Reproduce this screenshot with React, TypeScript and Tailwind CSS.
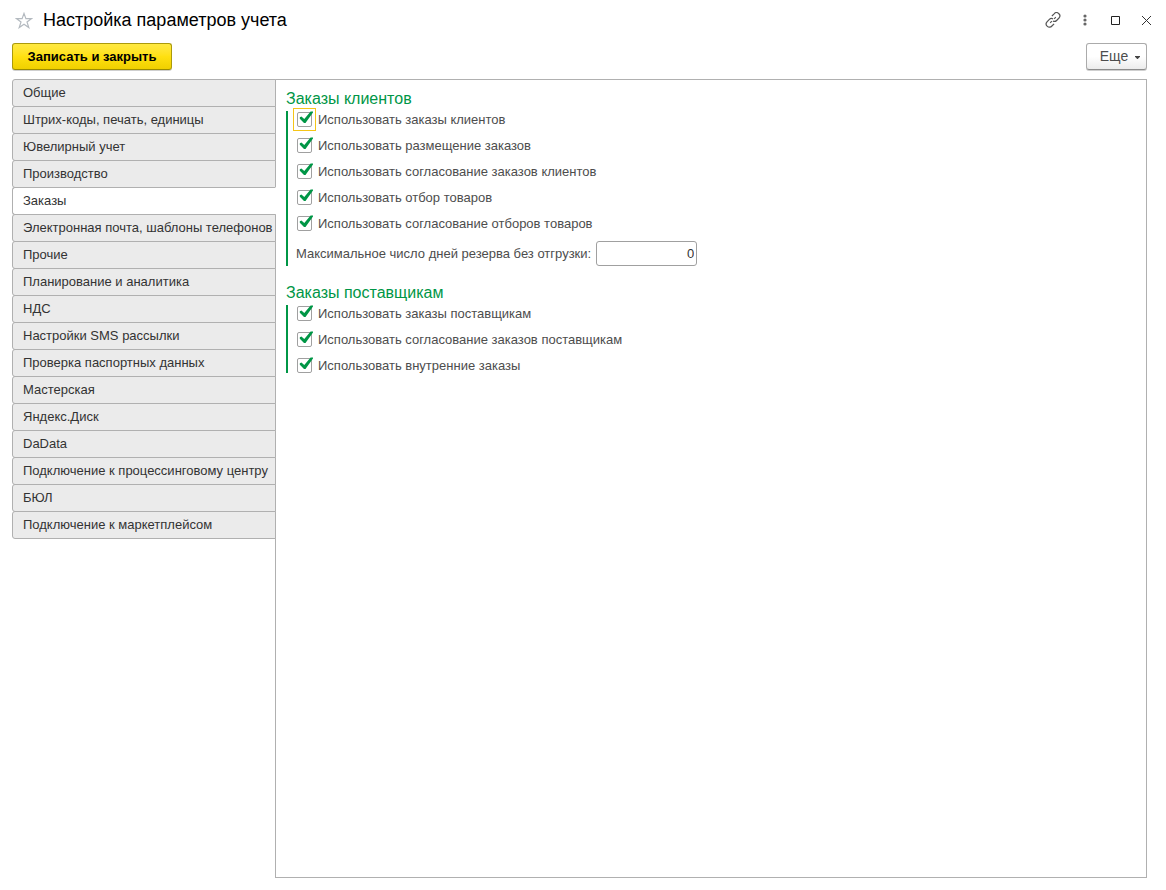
import { useState } from "react";

const tabs = [
  "Общие",
  "Штрих-коды, печать, единицы",
  "Ювелирный учет",
  "Производство",
  "Заказы",
  "Электронная почта, шаблоны телефонов",
  "Прочие",
  "Планирование и аналитика",
  "НДС",
  "Настройки SMS рассылки",
  "Проверка паспортных данных",
  "Мастерская",
  "Яндекс.Диск",
  "DaData",
  "Подключение к процессинговому центру",
  "БЮЛ",
  "Подключение к маркетплейсом",
];

const customerOptions = [
  "Использовать заказы клиентов",
  "Использовать размещение заказов",
  "Использовать согласование заказов клиентов",
  "Использовать отбор товаров",
  "Использовать согласование отборов товаров",
];

const supplierOptions = [
  "Использовать заказы поставщикам",
  "Использовать согласование заказов поставщикам",
  "Использовать внутренние заказы",
];

function Option({ label, highlighted = false }: { label: string; highlighted?: boolean }) {
  return (
    <label className="flex h-4 items-start gap-[6px] pl-px leading-[18px] whitespace-nowrap">
      <span className="relative mt-px block size-[15px] shrink-0">
        {highlighted && <span className="absolute -inset-[3px] outline outline-[#f5c518]" />}
        <input
          type="checkbox"
          defaultChecked
          className="peer relative block size-[15px] appearance-none rounded-[2px] border border-[#a0a0a0] bg-white outline-offset-3 focus:outline focus:outline-[#f5c518]"
        />
        <svg
          viewBox="0 0 15 15"
          className="pointer-events-none absolute inset-0 hidden size-[15px] overflow-visible peer-checked:block"
          fill="#009646"
          aria-hidden="true"
        >
          <path d="M2.8 5.2 L4.4 4.4 L7.3 7 L13.6 -0.6 H16 V0.5 L8.5 11 H7 L2.8 6.8 Z" />
        </svg>
      </span>
      {label}
    </label>
  );
}

function Group({ title, children }: { title: string; children: React.ReactNode }) {
  return (
    <section>
      <h2 className="h-6 text-base leading-6 text-[#009646]">{title}</h2>
      <div className="flex flex-col items-start gap-[10px] border-l-2 border-[#009646] pl-2">{children}</div>
    </section>
  );
}

export default function App() {
  const [active, setActive] = useState("Заказы");

  return (
    <main className="flex min-h-screen flex-col bg-white pr-[19px] pb-3 pl-3 font-['Liberation_Sans',Arial,sans-serif] text-[13px] leading-4 text-[#4d4d4d]">
      <header className="flex h-[43px] items-center justify-between pb-[3px]">
        <div className="flex items-center gap-[10px] pl-[3px]">
          <button type="button" aria-label="Добавить в избранное">
            <svg viewBox="0 0 18 17" className="block h-[17px] w-[18px]" fill="none" stroke="#b4bac0" strokeWidth="1.2" aria-hidden="true">
              <path d="M9 1.4 L10.9 6.6 H16.6 L12 10 L13.8 15.6 L9 12.3 L4.2 15.6 L6 10 L1.4 6.6 H7.1 Z" />
            </svg>
          </button>
          <h1 className="text-lg leading-6 text-black">Настройка параметров учета</h1>
        </div>
        <div className="-mr-[5px] flex items-center">
          <button type="button" aria-label="Скопировать ссылку" className="mr-[22px]">
            <svg viewBox="0 0 16 16" className="block size-4" fill="none" stroke="#555" strokeWidth="1.2" aria-hidden="true">
              <path d="M6.9 4 L9.1 1.8 A2.9 2.9 0 0 1 14 6 L11.6 8.5 A2.9 2.9 0 0 1 7.9 8.9" />
              <path d="M9.1 11.8 L6.9 14 A2.9 2.9 0 0 1 2 9.8 L4.4 7.3 A2.9 2.9 0 0 1 8.1 6.9" />
              <path d="M5.2 10.8 L6.8 9.2 M9.2 6.8 L10.8 5.2" />
            </svg>
          </button>
          <button type="button" aria-label="Дополнительные действия" className="mr-6">
            <svg viewBox="0 0 4 12" className="block h-3 w-1" fill="#666" aria-hidden="true">
              <circle cx="2" cy="2" r="1.6" />
              <circle cx="2" cy="6" r="1.6" />
              <circle cx="2" cy="10" r="1.6" />
            </svg>
          </button>
          <button type="button" aria-label="Развернуть" className="mr-5">
            <svg viewBox="0 0 10 10" className="block size-[10px]" fill="none" stroke="#222" aria-hidden="true">
              <path d="M.5 1.5 H8.5 V9.5 H.5 Z" />
            </svg>
          </button>
          <button type="button" aria-label="Закрыть">
            <svg viewBox="0 0 11 11" className="block size-[11px]" fill="none" stroke="#333" aria-hidden="true">
              <path d="M1 1 L10 10 M10 1 L1 10" />
            </svg>
          </button>
        </div>
      </header>

      <div className="mb-[9px] flex items-start justify-between">
        <button
          type="button"
          className="h-[27px] w-40 rounded-[3px] border border-[#ab9a0c] border-b-[#9c8c00] bg-linear-to-b from-[#ffe940] via-[#ffe010] to-[#f0d000] font-bold text-black shadow-[0_1px_0_#cfcfcf]"
        >
          Записать и закрыть
        </button>
        <button
          type="button"
          className="flex h-[27px] w-[61px] items-center justify-center gap-[7px] rounded-[3px] border border-[#ababab] border-b-[#8c8c8c] bg-linear-to-b from-white from-50% to-[#ececec] pb-px pl-[7px] text-sm leading-4 shadow-[0_1px_0_#cfcfcf]"
        >
          Еще
          <svg viewBox="0 0 5 3" className="mt-[2px] block h-[3px] w-[5px]" fill="#444" aria-hidden="true">
            <path d="M0 0 H5 V.8 L2.8 3 H2.2 L0 .8 Z" />
          </svg>
        </button>
      </div>

      <div className="flex flex-1">
        <div role="tablist" aria-orientation="vertical" className="z-10 -mr-px flex w-[264px] shrink-0 flex-col">
          {tabs.map((tab) => (
            <button
              key={tab}
              type="button"
              role="tab"
              aria-selected={tab === active}
              onClick={() => setActive(tab)}
              className={
                tab === active
                  ? "-mb-px h-7 rounded-l-[3px] border border-[#b0b0b0] border-r-white bg-white pb-px pl-[10px] text-left whitespace-nowrap text-[#333]"
                  : "-mb-px h-7 rounded-l-[3px] border border-[#b0b0b0] bg-[#ebebeb] pb-px pl-[10px] text-left whitespace-nowrap text-[#333]"
              }
            >
              {tab}
            </button>
          ))}
        </div>

        <div role="tabpanel" aria-label={active} className="flex flex-1 flex-col gap-[15px] border border-[#b0b0b0] px-[10px] pt-[7px] pb-4">
          <Group title="Заказы клиентов">
            {customerOptions.map((label, i) => (
              <Option key={label} label={label} highlighted={i === 0} />
            ))}
            <div className="flex items-center gap-[5px]">
              <label htmlFor="reserve-days" className="whitespace-nowrap">
                Максимальное число дней резерва без отгрузки:
              </label>
              <input
                id="reserve-days"
                type="text"
                inputMode="numeric"
                defaultValue="0"
                className="h-[25px] w-[101px] rounded-[3px] border border-[#a0a0a0] bg-white px-[2px] text-right text-[#333]"
              />
            </div>
          </Group>
          <Group title="Заказы поставщикам">
            {supplierOptions.map((label) => (
              <Option key={label} label={label} />
            ))}
          </Group>
        </div>
      </div>
    </main>
  );
}
